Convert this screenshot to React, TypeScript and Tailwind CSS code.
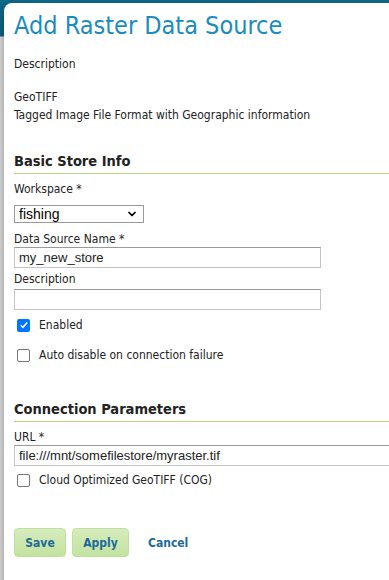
import { ChevronDown } from 'lucide-react';

const body = { fontFamily: '"DejaVu Sans Condensed", "DejaVu Sans", sans-serif' };
const arial = { fontFamily: '"Liberation Sans", Arial, sans-serif' };

function SectionTitle({ children }: { children: string }) {
    return (
        <h2 className="text-[14.5px] font-bold text-[#222] leading-[18px] pb-[3px] border-b border-[#b7da8d]">
            {children}
        </h2>
    );
}

function TextField({ value, wide }: { value: string; wide?: boolean }) {
    return (
        <div
            className={`h-[21px] border border-[#c4c4c4] border-t-[#9a9a9a] bg-white px-[4px] flex items-center text-[13px] text-[#222] ${wide ? 'w-[390px]' : 'w-[307px]'}`}
            style={arial}
        >
            {value}
        </div>
    );
}

function Check({ label, checked }: { label: string; checked?: boolean }) {
    return (
        <label className="flex items-center gap-[9px] pl-[3px]">
            {checked ? (
                <span className="w-[13px] h-[13px] rounded-[2px] bg-[#0075ff] flex items-center justify-center">
                    <svg viewBox="0 0 12 12" className="w-[10px] h-[10px]">
                        <path d="M2.2 6.3 L4.8 8.8 L9.8 3" fill="none" stroke="white" strokeWidth="2" />
                    </svg>
                </span>
            ) : (
                <span className="w-[13px] h-[13px] rounded-[2px] border border-[#767676] bg-white" />
            )}
            <span className="text-[12px] text-[#222]">{label}</span>
        </label>
    );
}

export default function App() {
    return (
        <div className="w-[389px] h-[580px] overflow-hidden bg-[linear-gradient(to_bottom,#0f6a8a_0px,#0c5f7e_36px,#d3d3d3_37px,#d3d3d3_100%)] pt-[3px] pl-[4px]" style={body}>
            <div className="h-[600px] w-[420px] bg-white rounded-tl-[8px] shadow-[-2px_0_5px_rgba(0,0,0,0.18)] pl-[10px] pt-[6px] text-[12px] text-[#222]">
                <h1 className="text-[25px] leading-[34px] text-[#1a8cc0]">Add Raster Data Source</h1>

                <p className="mt-[13px] leading-[16px]">Description</p>
                <p className="mt-[16px] leading-[18px]">GeoTIFF</p>
                <p className="leading-[18px]">Tagged Image File Format with Geographic information</p>

                <div className="mt-[28px]">
                    <SectionTitle>Basic Store Info</SectionTitle>
                </div>

                <p className="mt-[7px] leading-[16px]">Workspace *</p>
                <div className="mt-[8px] w-[130px] h-[18px] border border-[#9a9a9a] flex items-center justify-between pl-[4px] pr-[5px] text-[14px] text-black" style={arial}>
                    <span>fishing</span>
                    <ChevronDown className="w-[12px] h-[12px]" strokeWidth={3.5} />
                </div>

                <p className="mt-[8px] leading-[16px]">Data Source Name *</p>
                <TextField value="my_new_store" />
                <p className="mt-[3px] leading-[16px]">Description</p>
                <div className="mt-[2px]">
                    <TextField value="" />
                </div>

                <div className="mt-[6px]">
                    <Check label="Enabled" checked />
                </div>
                <div className="mt-[12px]">
                    <Check label="Auto disable on connection failure" />
                </div>

                <div className="mt-[36px]">
                    <SectionTitle>Connection Parameters</SectionTitle>
                </div>
                <p className="mt-[7px] leading-[16px]">URL *</p>
                <TextField value="file:///mnt/somefilestore/myraster.tif" wide />
                <div className="mt-[5px]">
                    <Check label="Cloud Optimized GeoTIFF (COG)" />
                </div>

                <div className="mt-[39px] flex items-center gap-[6px]">
                    <button className="h-[29px] w-[52px] rounded-[4px] border border-[#bfe0a0] bg-[linear-gradient(to_bottom,#d6ecbc,#c3e29f)] text-[12px] font-bold text-[#1c6a98]">
                        Save
                    </button>
                    <button className="h-[29px] w-[57px] rounded-[4px] border border-[#bfe0a0] bg-[linear-gradient(to_bottom,#d6ecbc,#c3e29f)] text-[12px] font-bold text-[#1c6a98]">
                        Apply
                    </button>
                    <button className="ml-[13px] text-[12px] font-bold text-[#1c6a98]">Cancel</button>
                </div>
            </div>
        </div>
    );
}
